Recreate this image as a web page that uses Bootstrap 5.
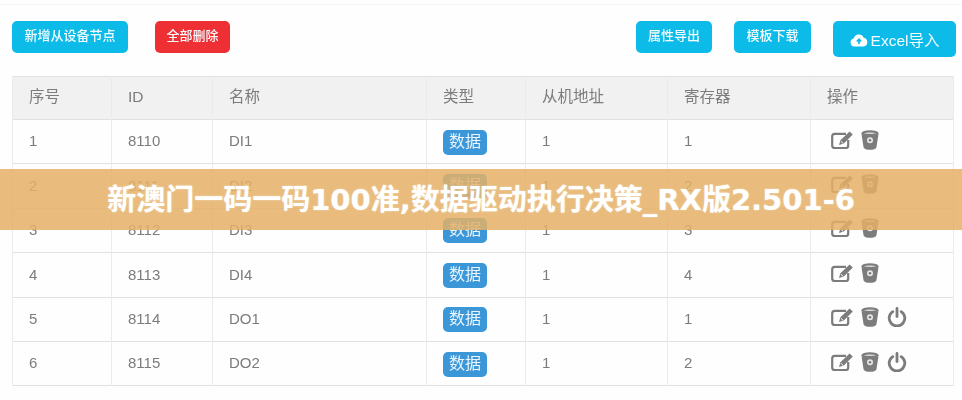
<!doctype html>
<html lang="zh"><head><meta charset="utf-8">
<link href="https://cdn.jsdelivr.net/npm/bootstrap@5.3.0/dist/css/bootstrap.min.css" rel="stylesheet">
<style>
html,body{height:400px;overflow:hidden}
body{background:#fefefe;font-family:"Liberation Sans","Noto Sans CJK SC",sans-serif;color:#7c7c7c;position:relative}
.scene{padding:4px 6px 0 12px;filter:blur(.45px)}
.topline{height:1px;background:#f6f6f6;margin:0 -6px 0 -12px}
.tools{height:58px;padding-top:16px;align-items:flex-start}
.tbtn{background:#0dbbe8;color:#f4fcff;border:0;border-radius:5px;height:32px;font-size:13px;font-weight:500;padding:0 0 3px;line-height:27px}
.w1{width:116px;margin-right:27px}.w2{width:75px;background:#ee3034}.w3{width:76px;margin-right:22px}.w4{width:77px;margin-right:22px}
.w5{width:123px;height:36px;font-size:15.500px;font-weight:400;display:flex;align-items:center;justify-content:center;gap:3px;margin-right:0;padding:2px 0 0}
.grid{width:941px;table-layout:fixed;margin:13px 0 0;--bs-table-color:#7c7c7c;--bs-table-bg:transparent}
.grid th,.grid td{padding:0 0 0 16px;vertical-align:middle;font-weight:400;color:#7c7c7c;border-color:#ebebeb;height:44.400px}
.grid th{background:#f1f1f1;height:43px;font-size:15.500px;padding-bottom:2px}
.grid td{font-size:15px}
.tag{display:inline-block;background:#3b97d8;color:#eaf5fc;font-size:16px;width:44px;height:25px;line-height:24px;text-align:center;border-radius:5px;margin-top:1px}
.acts{display:flex;gap:8px;align-items:center;margin:-4px 0 0 4px}
.acts svg{display:block}
.banner{position:absolute;left:0;right:0;top:169px;height:61px;padding-top:2px;background:rgba(229,176,102,.85);display:flex;align-items:center;justify-content:center;color:#fff;font-family:"DejaVu Sans","Noto Sans CJK SC",sans-serif;font-weight:700;font-size:29px;text-shadow:0 0 2px rgba(255,255,255,.5);white-space:nowrap}
</style></head><body>
<svg width="0" height="0" class="position-absolute"><defs>
<symbol id="i-edit" viewBox="0 0 22 18"><path d="M15 2.800H3.600A2.600 2.600 0 0 0 1.200 5.400v9A2.600 2.600 0 0 0 3.600 17h11A2.600 2.600 0 0 0 17.200 14.400V9" fill="none" stroke="#7c7c7c" stroke-width="2.200"/><path d="M18.600 .4l3.200 3-9 9.200-4.800 1.400 1.400-4.800z" fill="#7c7c7c"/><path d="M9.800 10.200l2.400 2.200" stroke="#fff" stroke-width="1"/></symbol>
<symbol id="i-bin" viewBox="0 0 18 20"><ellipse cx="9" cy="3.200" rx="8.500" ry="3" fill="#7c7c7c"/><path d="M.5 4l2 13c.3 2 3.500 2.800 6.500 2.800s6.200-.8 6.500-2.800l2-13c-2 1.800-15 1.800-17 0z" fill="#7c7c7c"/><path d="M2.800 3.200c2-1.100 10.400-1.100 12.400 0-2 1.100-10.400 1.100-12.400 0z" fill="#d8d8d8"/><circle cx="9" cy="10.200" r="3" fill="#e8e8e8"/><circle cx="9" cy="10.200" r="1.300" fill="#7c7c7c"/></symbol>
<symbol id="i-pow" viewBox="0 0 20 20"><path d="M5.800 4.600a7.800 7.800 0 1 0 8.400 0" fill="none" stroke="#7c7c7c" stroke-width="2.800" stroke-linecap="round"/><path d="M10 1.500v8" stroke="#7c7c7c" stroke-width="2.800" stroke-linecap="round"/></symbol>
</defs></svg>
<main class="scene">
<div class="topline"></div>
<div class="tools d-flex">
<button class="tbtn w1">新增从设备节点</button><button class="tbtn w2">全部删除</button>
<div class="ms-auto d-flex">
<button class="tbtn w3">属性导出</button><button class="tbtn w4">模板下载</button>
<button class="tbtn w5"><svg width="18" height="14" viewBox="0 0 18 14"><path d="M4.500 13.500a4 4 0 0 1-.8-7.900A5.200 5.200 0 0 1 13.600 4.800 4.400 4.400 0 0 1 13.500 13.500z" fill="#fff"/><path d="M9 11V6.500M6.800 8.500 9 6.200l2.200 2.300" fill="none" stroke="#0dbbe8" stroke-width="1.700"/></svg>Excel导入</button>
</div></div>
<table class="table table-bordered grid">
<colgroup><col style="width:99px"><col style="width:101px"><col style="width:214px"><col style="width:99px"><col style="width:142px"><col style="width:143px"><col style="width:143px"></colgroup>
<thead><tr><th>序号</th><th>ID</th><th>名称</th><th>类型</th><th>从机地址</th><th>寄存器</th><th>操作</th></tr></thead>
<tbody>
<tr><td>1</td><td>8110</td><td>DI1</td><td><span class="tag">数据</span></td><td>1</td><td>1</td><td><div class="acts"><svg width="22" height="18"><use href="#i-edit"/></svg><svg width="18" height="20"><use href="#i-bin"/></svg></div></td></tr>
<tr><td>2</td><td>8111</td><td>DI2</td><td><span class="tag">数据</span></td><td>1</td><td>2</td><td><div class="acts"><svg width="22" height="18"><use href="#i-edit"/></svg><svg width="18" height="20"><use href="#i-bin"/></svg></div></td></tr>
<tr><td>3</td><td>8112</td><td>DI3</td><td><span class="tag">数据</span></td><td>1</td><td>3</td><td><div class="acts"><svg width="22" height="18"><use href="#i-edit"/></svg><svg width="18" height="20"><use href="#i-bin"/></svg></div></td></tr>
<tr><td>4</td><td>8113</td><td>DI4</td><td><span class="tag">数据</span></td><td>1</td><td>4</td><td><div class="acts"><svg width="22" height="18"><use href="#i-edit"/></svg><svg width="18" height="20"><use href="#i-bin"/></svg></div></td></tr>
<tr><td>5</td><td>8114</td><td>DO1</td><td><span class="tag">数据</span></td><td>1</td><td>1</td><td><div class="acts"><svg width="22" height="18"><use href="#i-edit"/></svg><svg width="18" height="20"><use href="#i-bin"/></svg><svg width="20" height="20"><use href="#i-pow"/></svg></div></td></tr>
<tr><td>6</td><td>8115</td><td>DO2</td><td><span class="tag">数据</span></td><td>1</td><td>2</td><td><div class="acts"><svg width="22" height="18"><use href="#i-edit"/></svg><svg width="18" height="20"><use href="#i-bin"/></svg><svg width="20" height="20"><use href="#i-pow"/></svg></div></td></tr>
</tbody></table>
</main>
<div class="banner">新澳门一码一码100准,数据驱动执行决策_RX版2.501-6</div>
</body></html>
